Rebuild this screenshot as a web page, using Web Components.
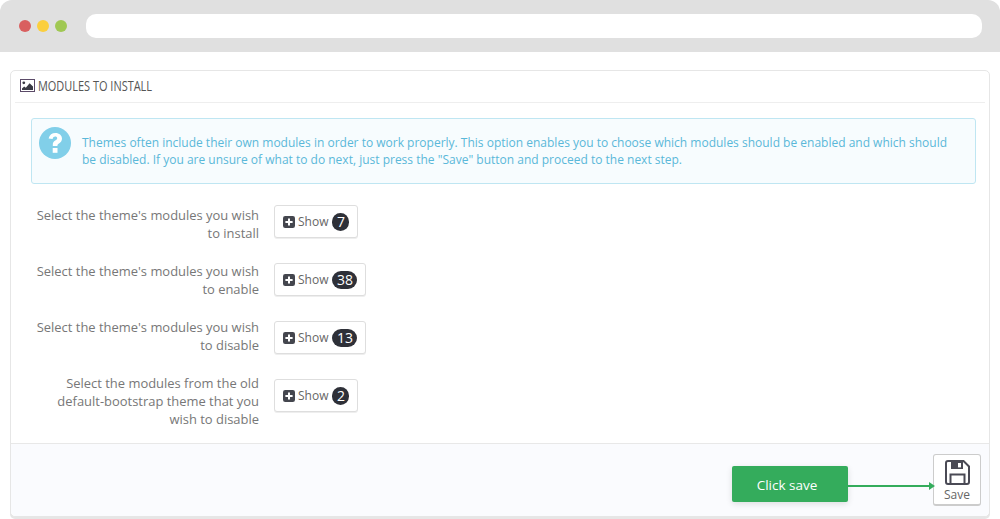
<!DOCTYPE html>
<html>
<head>
<meta charset="utf-8">
<title>Modules to install</title>
<style>
    html, body { margin:0; padding:0; background:#fff; }
    body { width:1000px; height:519px; overflow:hidden; font-family:"Open Sans", sans-serif; }
</style>
</head>
<body>
<browser-frame>
    <module-panel heading="Modules to install">
        <help-alert>Themes often include their own modules in order to work properly. This option enables you to choose which modules should be enabled and which should be disabled. If you are unsure of what to do next, just press the "Save" button and proceed to the next step.</help-alert>
        <module-row count="7" nudge="0">Select the theme's modules you wish to install</module-row>
        <module-row count="38" nudge="-2">Select the theme's modules you wish to enable</module-row>
        <module-row count="13" nudge="-4">Select the theme's modules you wish to disable</module-row>
        <module-row count="2" nudge="-6">Select the modules from the old default-bootstrap theme that you wish to disable</module-row>
        <save-footer slot="footer"></save-footer>
    </module-panel>
</browser-frame>

<script>
class BrowserFrame extends HTMLElement {
    connectedCallback() {
        this.attachShadow({ mode: 'open' });
        this.shadowRoot.innerHTML = `
            <style>
                :host { display:block; }
                .bar {
                    height:52px;
                    background:#e0e0e0;
                    border-radius:12px 12px 0 0;
                    display:flex;
                    align-items:center;
                    padding:0 18px 0 19px;
                    box-sizing:border-box;
                }
                .dot { width:12px; height:12px; border-radius:50%; margin-right:6px; }
                .url { flex:1; height:24px; background:#fff; border-radius:10px; margin-left:13px; }
                .content { padding:18px 10px 0; }
            </style>
            <div class="bar">
                <span class="dot" style="background:#d95f5f"></span>
                <span class="dot" style="background:#fbcf3e"></span>
                <span class="dot" style="background:#a0c853"></span>
                <div class="url"></div>
            </div>
            <div class="content"><slot></slot></div>
        `;
    }
}
customElements.define('browser-frame', BrowserFrame);

class ModulePanel extends HTMLElement {
    connectedCallback() {
        const heading = this.getAttribute('heading');
        this.attachShadow({ mode: 'open' });
        this.shadowRoot.innerHTML = `
            <style>
                :host {
                    height:447px;
                    box-sizing:border-box;
                    background:#fff;
                    border:1px solid #e6e6e6;
                    border-radius:5px;
                    box-shadow:0 2px 0 #e6e6e6;
                    display:flex;
                    flex-direction:column;
                }
                .heading {
                    flex:none;
                    height:32px;
                    margin:0 4px;
                    box-sizing:border-box;
                    border-bottom:1px solid #eee;
                    display:flex;
                    align-items:center;
                    gap:3px;
                    padding:0 0 3px 5px;
                    color:#555;
                }
                .heading span {
                    font-size:15px;
                    text-transform:uppercase;
                    display:inline-block;
                    transform:scaleX(.73);
                    transform-origin:left center;
                    white-space:nowrap;
                }
                .body { flex:1; min-height:0; padding:15px 13px 0 20px; }
                svg { display:block; }
            </style>
            <div class="heading">
                <svg width="15" height="13" viewBox="0 0 15 13">
                    <rect x=".5" y=".5" width="14" height="12" fill="#fff" stroke="#5b4a68"/>
                    <circle cx="3.8" cy="3.8" r="1.4" fill="#3a3a44"/>
                    <path d="M2 11V9.4l2.2-2 1.6 1.4L9.6 4.2 13 7.6V11z" fill="#3a3a44"/>
                </svg>
                <span>${heading}</span>
            </div>
            <div class="body"><slot></slot></div>
            <slot name="footer"></slot>
        `;
    }
}
customElements.define('module-panel', ModulePanel);

class HelpAlert extends HTMLElement {
    connectedCallback() {
        this.attachShadow({ mode: 'open' });
        this.shadowRoot.innerHTML = `
            <style>
                :host {
                    display:block;
                    position:relative;
                    height:66px;
                    box-sizing:border-box;
                    background:#f7fcfe;
                    border:1px solid #bfe6f2;
                    border-radius:3px;
                    padding:15px 20px 0 50px;
                    margin-bottom:21px;
                    font-size:12px;
                    line-height:17px;
                    color:#5ab8d9;
                }
                svg { position:absolute; left:7px; top:8px; }
            </style>
            <svg width="32" height="32" viewBox="0 0 32 32">
                <circle cx="16" cy="16" r="16" fill="#81cfe9"/>
                <path d="M9.6 11.6C10.6 7.8 13 6 16.4 6c3.8 0 6.6 2.4 6.6 5.6 0 2.4-1.2 3.7-3 4.9-1.2.8-1.6 1.3-1.6 2.5h-4.6v-1.2c0-2 .8-3.1 2.4-4.2 1.3-.9 2-1.4 2-2.3 0-1-.9-1.7-2-1.7-1.3 0-2.1.7-2.6 2.4z" fill="#fff"/>
                <rect x="13.7" y="21" width="4.8" height="4.8" fill="#fff"/>
            </svg>
            <slot></slot>
        `;
    }
}
customElements.define('help-alert', HelpAlert);

class ModuleRow extends HTMLElement {
    connectedCallback() {
        const count = this.getAttribute('count');
        const nudge = this.getAttribute('nudge') || 0;
        this.attachShadow({ mode: 'open' });
        this.shadowRoot.innerHTML = `
            <style>
                :host {
                    display:flex;
                    align-items:flex-start;
                    gap:15px;
                    height:37px;
                    margin-bottom:21px;
                    font-size:12.95px;
                    line-height:18px;
                    color:#777;
                }
                .label {
                    width:228px;
                    flex:none;
                    text-align:right;
                    padding-top:1px;
                    margin-top:${nudge}px;
                    box-sizing:border-box;
                }
                button {
                    height:33px;
                    box-sizing:border-box;
                    background:#fff;
                    border:1px solid #dedede;
                    border-radius:3px;
                    box-shadow:0 1px 0 #eee;
                    padding:0 8px;
                    display:flex;
                    align-items:center;
                    font:12px "Open Sans", sans-serif;
                    color:#666;
                }
                svg { display:block; margin-right:3px; }
                .badge {
                    margin-left:4px;
                    min-width:17px;
                    height:18px;
                    box-sizing:border-box;
                    padding:0 4.5px;
                    border-radius:9px;
                    background:#2e3038;
                    color:#fff;
                    font-size:14px;
                    line-height:18px;
                    text-align:center;
                }
            </style>
            <div class="label"><slot></slot></div>
            <button>
                <svg width="12" height="12" viewBox="0 0 12 12">
                    <rect width="12" height="12" rx="2.2" fill="#44464e"/>
                    <path d="M5 2.4h2V5h2.6v2H7v2.6H5V7H2.4V5H5z" fill="#fff"/>
                </svg>
                Show
                <span class="badge">${count}</span>
            </button>
        `;
    }
}
customElements.define('module-row', ModuleRow);

class SaveFooter extends HTMLElement {
    connectedCallback() {
        this.attachShadow({ mode: 'open' });
        this.shadowRoot.innerHTML = `
            <style>
                :host {
                    flex:none;
                    display:flex;
                    justify-content:flex-end;
                    position:relative;
                    height:73px;
                    box-sizing:border-box;
                    background:#fafbfe;
                    border-top:1px solid #e8e8e8;
                    border-radius:0 0 5px 5px;
                    padding:10px 8px 0 0;
                }
                .save {
                    width:48px;
                    height:52px;
                    box-sizing:border-box;
                    background:#fff;
                    border:1px solid #ccc;
                    border-bottom-width:2px;
                    border-radius:3px;
                    padding:5px 0 0;
                    display:flex;
                    flex-direction:column;
                    align-items:center;
                    font:12px/14px "Open Sans", sans-serif;
                    color:#666;
                }
                .save svg { display:block; margin-bottom:3px; }
                .tip {
                    position:absolute;
                    left:721px;
                    top:22px;
                    width:116px;
                    height:36px;
                    box-sizing:border-box;
                    padding-right:6px;
                    background:#34ac5c;
                    border-radius:2px;
                    box-shadow:0 2px 6px rgba(0,0,0,.12);
                    color:#fff;
                    font-size:13.5px;
                    line-height:38px;
                    text-align:center;
                }
                .line { position:absolute; left:837px; top:41px; width:84px; height:2px; background:#34ac5c; }
                .head {
                    position:absolute;
                    left:918px;
                    top:38px;
                    width:0;
                    height:0;
                    border-left:6px solid #34ac5c;
                    border-top:4px solid transparent;
                    border-bottom:4px solid transparent;
                }
            </style>
            <button class="save">
                <svg width="25" height="25" viewBox="0 0 25 25">
                    <path d="M1 3a2 2 0 0 1 2-2h15.5l5.5 5.5V22a2 2 0 0 1-2 2H3a2 2 0 0 1-2-2z" fill="none" stroke="#4a4a55" stroke-width="2"/>
                    <path d="M6 2h12v7H6z" fill="#4a4a55"/>
                    <rect x="13" y="3" width="3" height="4.4" fill="#fff"/>
                    <path d="M5.5 23.5V14.5h14v9" fill="none" stroke="#4a4a55" stroke-width="2"/>
                </svg>
                Save
            </button>
            <div class="tip">Click save</div>
            <div class="line"></div>
            <div class="head"></div>
        `;
    }
}
customElements.define('save-footer', SaveFooter);
</script>
</body>
</html>
